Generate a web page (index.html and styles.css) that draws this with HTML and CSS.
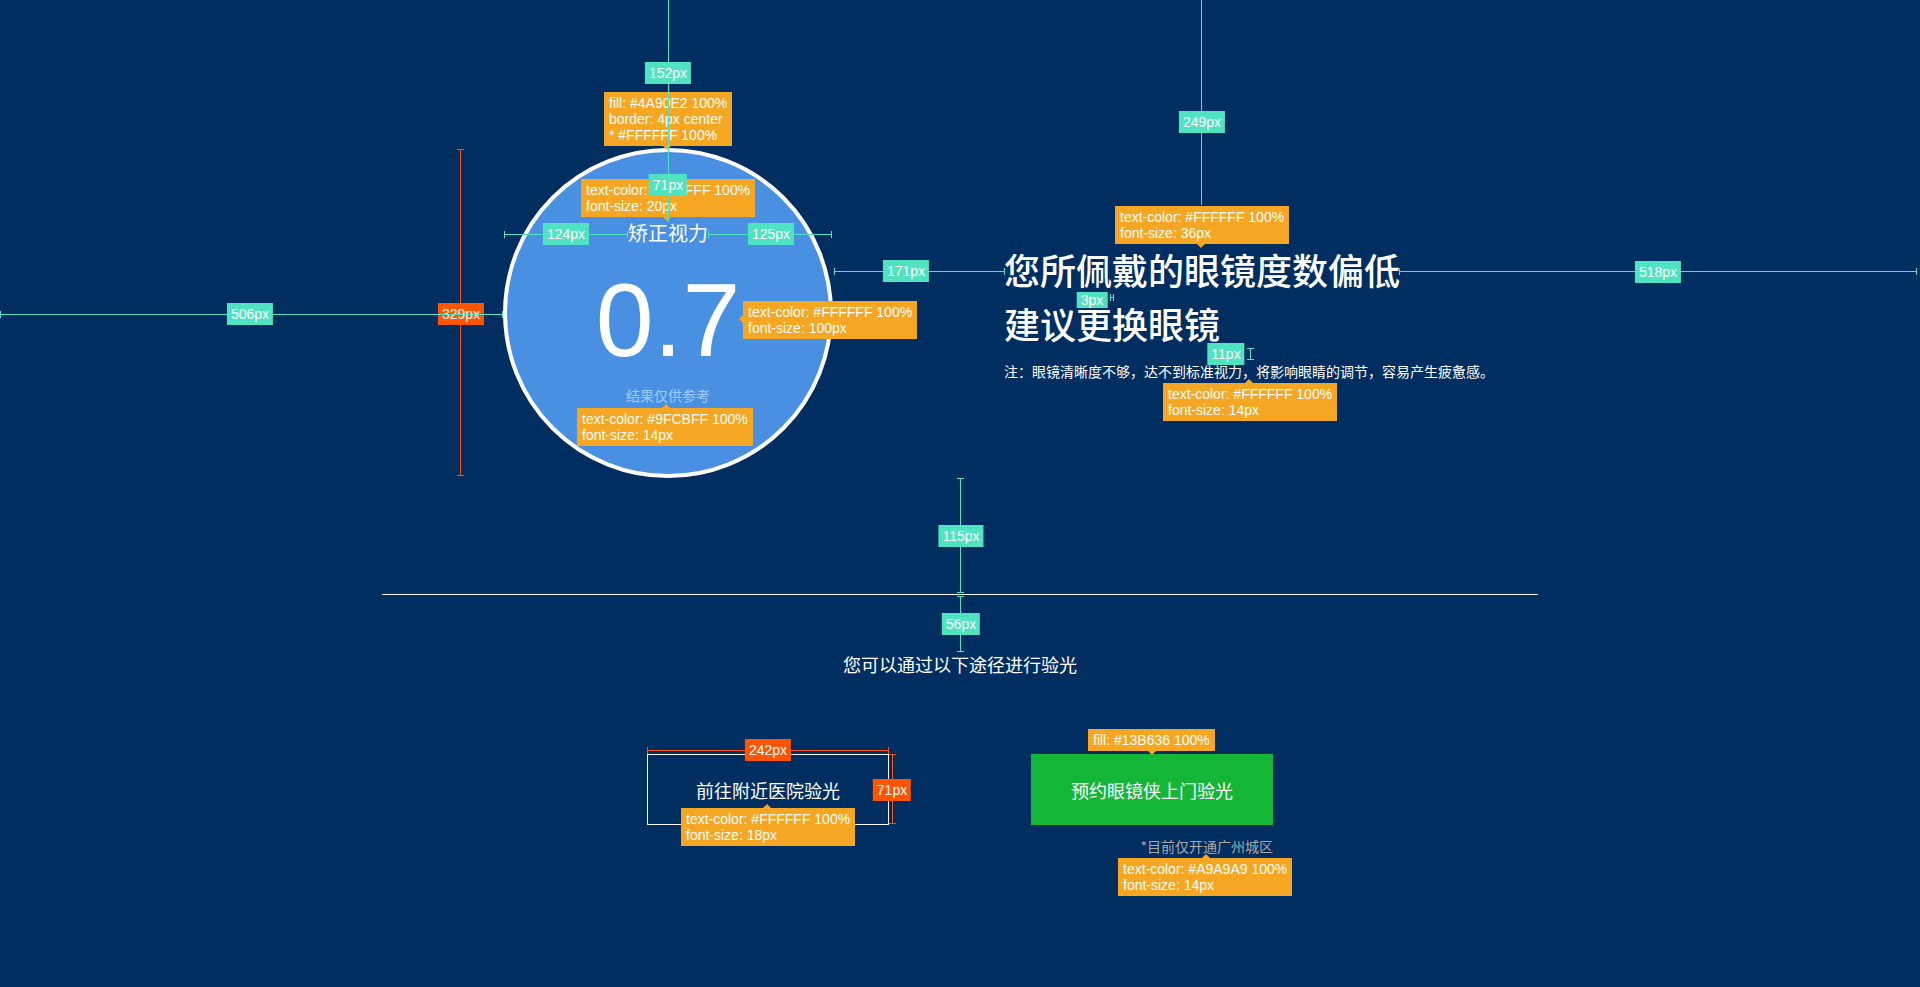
FILE: index.html
```html
<!DOCTYPE html>
<html lang="zh-CN">
<head>
    <meta charset="UTF-8">
    <meta name="viewport" content="width=device-width, initial-scale=1.0">
    <title>视力检测结果</title>
    <link rel="stylesheet" href="styles.css">
</head>
<body>
    <div class="page">
        <section class="result">
            <div class="vision-circle">
                <div class="vision-label">矫正视力</div>
                <div class="vision-value">0.7</div>
                <div class="vision-hint">结果仅供参考</div>
            </div>

            <div class="result-text">
                <h1 class="result-title">您所佩戴的眼镜度数偏低<br>建议更换眼镜</h1>
                <p class="result-note">注：眼镜清晰度不够，达不到标准视力，将影响眼睛的调节，容易产生疲惫感。</p>
            </div>
        </section>

        <div class="divider"></div>

        <p class="options-title">您可以通过以下途径进行验光</p>

        <div class="options">
            <a href="#" class="btn btn-outline">前往附近医院验光</a>
            <div class="option-home">
                <a href="#" class="btn btn-green">预约眼镜侠上门验光</a>
                <span class="option-note">*目前仅开通广州城区</span>
            </div>
        </div>

        <!-- spec annotations -->
        <div class="tip tip-down t-circle">fill: #4A90E2 100%<br>border: 4px center<br>* #FFFFFF 100%</div>
        <div class="tip tip-down t-label">text-color: #FFFFFF 100%<br>font-size: 20px</div>
        <div class="tip tip-left t-value">text-color: #FFFFFF 100%<br>font-size: 100px</div>
        <div class="tip tip-up t-hint">text-color: #9FCBFF 100%<br>font-size: 14px</div>
        <div class="tip tip-down t-head">text-color: #FFFFFF 100%<br>font-size: 36px</div>
        <div class="tip tip-up t-note">text-color: #FFFFFF 100%<br>font-size: 14px</div>
        <div class="tip tip-up t-btn">text-color: #FFFFFF 100%<br>font-size: 18px</div>
        <div class="tip tip-down t-fill">fill: #13B636 100%</div>
        <div class="tip tip-up t-area">text-color: #A9A9A9 100%<br>font-size: 14px</div>

        <div class="size-v s-circle"></div>
        <div class="size-h s-btn-w"></div>
        <div class="size-v s-btn-h"></div>
        <span class="size-label l-329">329px</span>
        <span class="size-label l-242">242px</span>
        <span class="size-label l-71b">71px</span>

        <div class="gap-v plain g-top"></div>
        <div class="gap-h g-left-in"></div>
        <div class="gap-h g-right-in"></div>
        <div class="gap-h g-left"></div>
        <div class="gap-h g-mid"></div>
        <div class="gap-v plain g-head-top"></div>
        <div class="gap-h g-right"></div>
        <div class="gap-h g-3"></div>
        <div class="gap-v g-11"></div>
        <div class="gap-v g-115"></div>
        <div class="gap-v g-56"></div>

        <span class="gap-label l-152">152px</span>
        <span class="gap-label l-71">71px</span>
        <span class="gap-label l-124">124px</span>
        <span class="gap-label l-125">125px</span>
        <span class="gap-label l-506">506px</span>
        <span class="gap-label l-171">171px</span>
        <span class="gap-label l-249">249px</span>
        <span class="gap-label l-518">518px</span>
        <span class="gap-label small l-3">3px</span>
        <span class="gap-label l-11">11px</span>
        <span class="gap-label l-115">115px</span>
        <span class="gap-label l-56">56px</span>
    </div>
</body>
</html>
```

FILE: styles.css
```css
:root {
    --color-bg: #002e60;
    --color-circle: #4a90e2;
    --color-green: #13b636;
    --color-gap: #50e3c2;
    --color-size: #ff5500;
    --color-tip: #f5a623;
}

* {
    box-sizing: border-box;
    margin: 0;
    padding: 0;
}

body {
    font-family: "Noto Sans CJK SC", "Liberation Sans", sans-serif;
    background-color: var(--color-bg);
    color: #ffffff;
}

.page {
    position: relative;
    width: 1920px;
    height: 987px;
    overflow: hidden;
}

/* result block */
.result {
    display: flex;
    align-items: flex-start;
    gap: 171px;
    padding: 148px 0 0 503px;
}

.vision-circle {
    width: 330px;
    height: 330px;
    flex-shrink: 0;
    border: 4px solid #ffffff;
    border-radius: 50%;
    background-color: var(--color-circle);
    display: flex;
    flex-direction: column;
    align-items: center;
}

.vision-label {
    margin-top: 71px;
    font-size: 20px;
    line-height: 20px;
}

.vision-value {
    margin-top: 25px;
    font-family: "Liberation Sans", sans-serif;
    font-size: 104px;
    line-height: 104px;
}

.vision-hint {
    margin-top: 16px;
    font-size: 14px;
    line-height: 14px;
    color: #9fcbff;
}

.result-text {
    margin-top: 94px;
}

.result-title {
    font-size: 36px;
    line-height: 54px;
    font-weight: 500;
}

.result-note {
    margin-top: 11px;
    font-size: 14px;
    line-height: 20px;
}

.divider {
    width: 1156px;
    height: 1px;
    margin: 116px auto 0;
    background-color: #ffffff;
}

.options-title {
    margin-top: 57px;
    font-size: 18px;
    line-height: 24px;
    text-align: center;
}

.options {
    display: flex;
    justify-content: center;
    align-items: flex-start;
    gap: 142px;
    margin-top: 78px;
}

.btn {
    display: flex;
    align-items: center;
    justify-content: center;
    width: 242px;
    height: 71px;
    font-size: 18px;
    color: #ffffff;
    text-decoration: none;
}

.btn-outline {
    border: 1px solid #ffffff;
}

.btn-green {
    background-color: var(--color-green);
}

.option-home {
    display: flex;
    flex-direction: column;
    align-items: flex-end;
}

.option-note {
    margin-top: 11px;
    font-size: 14px;
    line-height: 20px;
    color: #a9a9a9;
}

/* annotations */
.tip,
.gap-label,
.size-label,
.gap-v,
.gap-h,
.size-v,
.size-h {
    position: absolute;
}

.tip {
    padding: 3px 5px;
    background-color: var(--color-tip);
    font-family: "Liberation Sans", sans-serif;
    font-size: 14px;
    line-height: 16px;
    white-space: nowrap;
}

.tip::after {
    content: '';
    position: absolute;
    border: 4px solid transparent;
}

.tip-down::after {
    top: 100%;
    left: var(--ax);
    margin-left: -4px;
    border-top-color: var(--color-tip);
    border-bottom-width: 0;
}

.tip-up::after {
    bottom: 100%;
    left: var(--ax);
    margin-left: -4px;
    border-bottom-color: var(--color-tip);
    border-top-width: 0;
}

.tip-left::after {
    right: 100%;
    top: var(--ay);
    margin-top: -4px;
    border-right-color: var(--color-tip);
    border-left-width: 0;
}

.t-circle { left: 604px; top: 92px; --ax: 63px; }
.t-label { left: 581px; top: 179px; --ax: 86px; }
.t-value { left: 743px; top: 301px; --ay: 18px; }
.t-hint { left: 577px; top: 408px; --ax: 89px; }
.t-head { left: 1115px; top: 206px; --ax: 86px; }
.t-note { left: 1163px; top: 383px; --ax: 86px; }
.t-btn { left: 681px; top: 808px; --ax: 86px; }
.t-fill { left: 1088px; top: 729px; --ax: 64px; }
.t-area { left: 1118px; top: 858px; --ax: 88px; }

.gap-v,
.size-v {
    width: 1px;
}

.gap-h,
.size-h {
    height: 1px;
}

.gap-v,
.gap-h {
    background-color: var(--color-gap);
}

.size-v,
.size-h {
    background-color: var(--color-size);
}

.gap-h::before,
.gap-h::after,
.size-h::before,
.size-h::after {
    content: '';
    position: absolute;
    top: -3px;
    width: 1px;
    height: 7px;
    background-color: inherit;
}

.gap-v::before,
.gap-v::after,
.size-v::before,
.size-v::after {
    content: '';
    position: absolute;
    left: -3px;
    width: 7px;
    height: 1px;
    background-color: inherit;
}

.gap-h::before,
.size-h::before { left: 0; }
.gap-h::after,
.size-h::after { right: 0; }
.gap-v::before,
.size-v::before { top: 0; }
.gap-v::after,
.size-v::after { bottom: 0; }

.gap-v.plain::before,
.gap-v.plain::after {
    display: none;
}

.g-top { left: 668px; top: 0; height: 222px; }
.g-left-in { left: 504px; top: 234px; width: 124px; }
.g-right-in { left: 708px; top: 234px; width: 124px; }
.g-left { left: 0; top: 314px; width: 503px; }
.g-mid { left: 834px; top: 271px; width: 171px; }
.g-head-top { left: 1201px; top: 0; height: 205px; }
.g-right { left: 1399px; top: 271px; width: 518px; }
.g-3 { left: 1110px; top: 297px; width: 4px; }
.g-11 { left: 1250px; top: 348px; height: 12px; }
.g-115 { left: 960px; top: 478px; height: 115px; }
.g-56 { left: 960px; top: 596px; height: 56px; }

.s-circle { left: 460px; top: 149px; height: 327px; }
.s-btn-w { left: 647px; top: 750px; width: 242px; }
.s-btn-h { left: 892px; top: 754px; height: 70px; }

.gap-label,
.size-label {
    padding: 0 4px;
    font-family: "Liberation Sans", sans-serif;
    font-size: 14px;
    line-height: 22px;
    white-space: nowrap;
    transform: translate(-50%, -50%);
}

.gap-label {
    background-color: var(--color-gap);
}

.gap-label.small {
    line-height: 16px;
}

.size-label {
    background-color: var(--color-size);
}

.l-152 { left: 668px; top: 73px; }
.l-71 { left: 668px; top: 185px; }
.l-124 { left: 566px; top: 234px; }
.l-125 { left: 771px; top: 234px; }
.l-506 { left: 250px; top: 314px; }
.l-171 { left: 906px; top: 271px; }
.l-249 { left: 1202px; top: 122px; }
.l-518 { left: 1658px; top: 272px; }
.l-3 { left: 1092px; top: 300px; }
.l-11 { left: 1226px; top: 354px; }
.l-115 { left: 961px; top: 536px; }
.l-56 { left: 961px; top: 624px; }

.l-329 { left: 461px; top: 314px; }
.l-242 { left: 768px; top: 750px; }
.l-71b { left: 892px; top: 790px; }
```
